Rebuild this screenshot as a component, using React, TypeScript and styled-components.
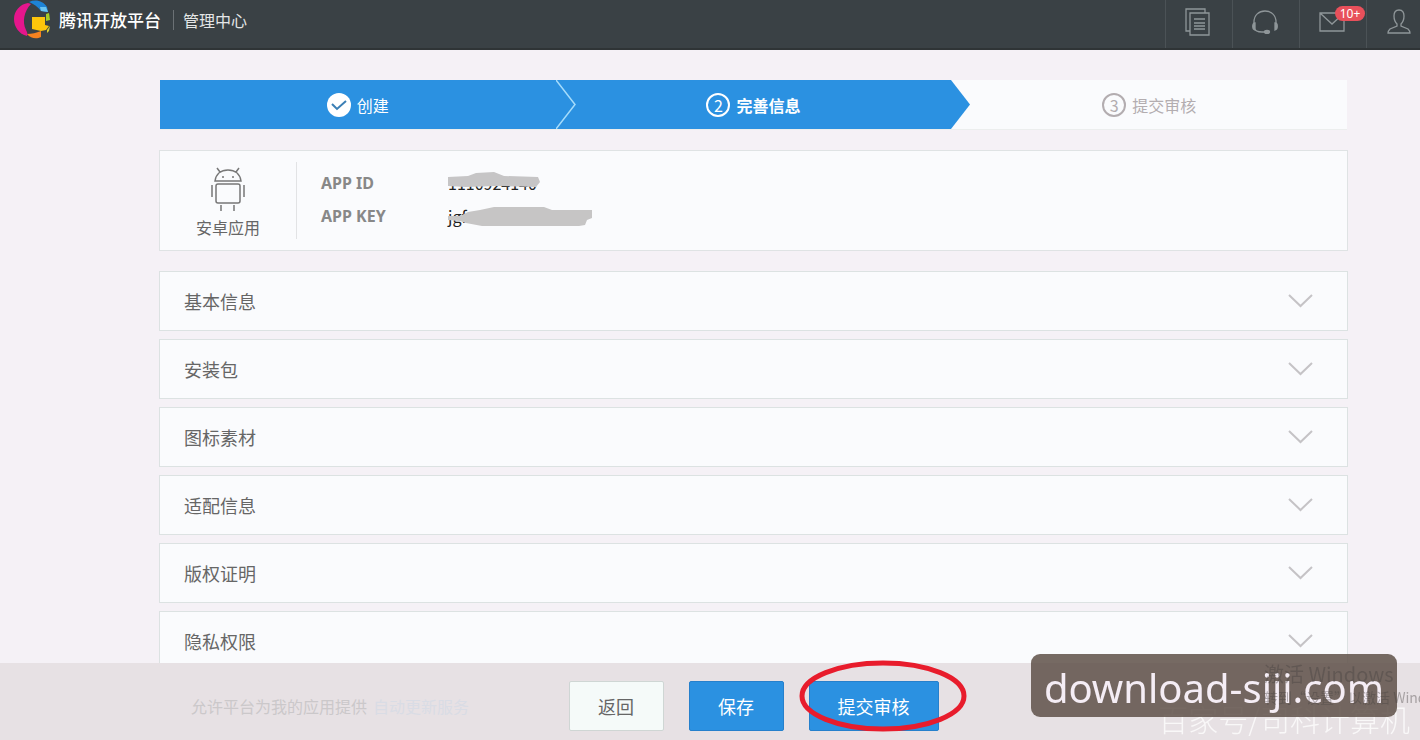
import React from "react";
import styled, { createGlobalStyle, css } from "styled-components";

const GlobalStyle = createGlobalStyle`
  * { box-sizing: border-box; }
  body {
    margin: 0;
    background: #f5f1f6;
    color: #666;
    font-family: "Noto Sans", "Noto Sans CJK SC", sans-serif;
    font-size: 16px;
    line-height: 24px;
  }
`;

const cjk = `"Noto Sans CJK SC", sans-serif`;

const Page = styled.div`
  min-height: 100vh;
  font-family: ${cjk};
`;

const Header = styled.header`
  display: flex;
  justify-content: space-between;
  height: 50px;
  background: #3a4145;
  border-bottom: 2px solid #2f3436;
  overflow: hidden;
`;

const Brand = styled.a`
  display: flex;
  align-items: center;
  padding: 0 0 8px 13px;
  color: #fff;
  text-decoration: none;
`;

const BrandName = styled.span`
  margin-left: 6px;
  font-size: 17px;
  font-weight: 500;
`;

const BrandSection = styled.span`
  margin-left: 12px;
  padding-left: 9px;
  border-left: 1px solid #6b7175;
  line-height: 20px;
  color: #e4e6e7;
`;

const Tools = styled.nav`
  display: flex;
`;

const Tool = styled.button<{ $last?: boolean }>`
  position: relative;
  display: flex;
  align-items: center;
  justify-content: center;
  width: ${(p) => (p.$last ? 54 : 67)}px;
  padding: 0 2px 4px 0;
  border: 0;
  border-left: 1px solid #4b5256;
  background: none;
  color: #8f9699;
  ${(p) => p.$last && css`justify-content: flex-end; padding-right: 9px;`}
`;

const Badge = styled.span`
  position: absolute;
  top: 6px;
  right: 1px;
  width: 30px;
  height: 15px;
  border-radius: 8px;
  background: #e8505b;
  color: #fff;
  font: 12px/15px "Noto Sans", sans-serif;
  text-align: center;
`;

const Content = styled.main`
  padding: 30px 72px 0 159px;
`;

const Steps = styled.ol`
  display: grid;
  grid-template-columns: repeat(3, 1fr);
  height: 50px;
  margin: 0 1px 20px;
  padding: 0;
  list-style: none;
  border-bottom: 1px solid #eceeee;
`;

const Step = styled.li<{ $active?: boolean; $bold?: boolean }>`
  position: relative;
  display: flex;
  align-items: center;
  justify-content: center;
  gap: 6px;
  background: ${(p) => (p.$active ? "#2b91e1" : "#fafbfd")};
  color: ${(p) => (p.$active ? "#fff" : "#b3adb0")};
  font-weight: ${(p) => (p.$bold ? 700 : 400)};
`;

const StepArrow = styled.svg`
  position: absolute;
  top: 0;
  left: 0;
  width: 20px;
  height: 100%;
`;

const StepNumber = styled.span`
  display: flex;
  align-items: center;
  justify-content: center;
  width: 24px;
  height: 24px;
  border: 2px solid currentColor;
  border-radius: 50%;
  font-weight: 400;
`;

const AppCard = styled.section`
  display: flex;
  align-items: center;
  height: 101px;
  margin-bottom: 20px;
  border: 1px solid #dfe3e4;
  background: #fafbfd;
`;

const AppKind = styled.div`
  display: flex;
  flex-direction: column;
  align-items: center;
  justify-content: flex-end;
  gap: 4px;
  width: 137px;
  height: 77px;
  border-right: 1px solid #e2e3e5;
`;

const Credentials = styled.dl`
  display: grid;
  grid-template-columns: 127px auto;
  row-gap: 9px;
  margin: 0 0 3px 24px;
`;

const Term = styled.dt`
  color: #888;
  font-family: "Noto Sans", sans-serif;
  font-weight: 700;
`;

const Value = styled.dd`
  position: relative;
  margin: 0;
  color: #222;
`;

const Smudge = styled.svg`
  position: absolute;
  top: 0;
  left: 0;
`;

const Panels = styled.div`
  display: flex;
  flex-direction: column;
  gap: 8px;
`;

const Panel = styled.button`
  display: flex;
  align-items: center;
  justify-content: space-between;
  height: 60px;
  padding: 0 34px 0 24px;
  border: 1px solid #dce2e2;
  background: #fafbfd;
  color: #666;
  font: 18px/24px ${cjk};
`;

const Footer = styled.footer`
  position: fixed;
  right: 0;
  bottom: 0;
  left: 0;
  display: grid;
  grid-template-columns: 1fr auto 1fr;
  align-items: center;
  height: 77px;
  padding: 8px 72px 0 159px;
  background: #e7e1e4;
`;

const Note = styled.p`
  margin: 0 0 0 32px;
  color: #cbc8ca;
  white-space: nowrap;
`;

const NoteLink = styled.a`
  margin-left: 6px;
  color: #d9dce5;
  text-decoration: none;
`;

const Actions = styled.div`
  display: flex;
  gap: 25px;
`;

const Action = styled.button<{ $primary?: boolean }>`
  min-width: 95px;
  height: 50px;
  padding: 0 28px;
  border: 1px solid ${(p) => (p.$primary ? "#2680cc" : "#cfd6d4")};
  border-radius: 2px;
  background: ${(p) => (p.$primary ? "#2b91e1" : "#f5faf9")};
  color: ${(p) => (p.$primary ? "#fff" : "#666")};
  font: 18px/24px ${cjk};
`;

const Marked = styled.div`
  position: relative;
  display: flex;
`;

const RedRing = styled.svg`
  position: absolute;
  top: -21px;
  left: -10px;
  pointer-events: none;
`;

const Overlay = styled.div`
  position: fixed;
  right: 0;
  bottom: 0;
  width: 390px;
  height: 90px;
  overflow: hidden;
  pointer-events: none;
`;

const Activation = styled.div`
  position: absolute;
  top: 12px;
  left: 234px;
  color: rgba(70, 65, 66, 0.4);
  font: 14px/22px ${cjk};
  white-space: nowrap;
`;

const ActivationTitle = styled.div`
  font-size: 20px;
  line-height: 24px;
`;

const Author = styled.div`
  position: absolute;
  right: 10px;
  bottom: 4px;
  color: rgba(255, 255, 255, 0.75);
  font: 300 30px/36px ${cjk};
  white-space: nowrap;
`;

const SiteTag = styled.div`
  position: absolute;
  top: 4px;
  right: 23px;
  width: 366px;
  height: 63px;
  border-radius: 9px;
  background: rgba(98, 84, 76, 0.87);
  color: #f5edf5;
  font: 40px/68px "Noto Sans", sans-serif;
  text-align: center;
`;

const Logo = () => (
  <svg width="40" height="42" viewBox="0 0 40 42" aria-hidden="true">
    <path d="M15 4C7 5 1 12 1 20c0 8 5 15 13 17 1-2 0-4-1-6-4-8-2-19 5-26z" fill="#e5168c" />
    <path d="M16 3c7-3 14-1 18 5l1 5-7-1c-3-4-7-7-12-9z" fill="#1d83d6" />
    <path d="M27 8l6 0 2 5-7-1z" fill="#6bc4f0" />
    <path d="M33 15l3-1 1 7-4 1z" fill="#a5cc26" />
    <path d="M19 18h13v8l4 1-3 4-5 1-9-2z" fill="#fdc50b" />
    <path d="M34 31l3-4-1 5-2 2z" fill="#d9cf35" />
    <path d="M14 35c5 0 9-1 14-3v6c-4 2-10 2-14-3z" fill="#f58220" />
  </svg>
);

const line = { fill: "none", stroke: "currentColor", strokeWidth: 1.3 };

const DocsIcon = () => (
  <svg width="26" height="28" viewBox="0 0 26 28" {...line}>
    <path d="M5 23H1V1h19v4M5 5h19v22H5zM9 11h11M9 15h11M9 18h11M9 21h11" />
  </svg>
);

const HeadsetIcon = () => (
  <svg width="28" height="24" viewBox="0 0 28 24" {...line}>
    <path d="M3 13V12C3 5 8 1 14 1s11 4 11 11v1M3 18c1 3 4 4 8 4h4" />
    <path d="M4 13c-3 0-3 6 0 7zM24 13c3 0 3 6 0 7z" fill="currentColor" />
    <ellipse cx="16" cy="22" rx="2.5" ry="1.5" fill="currentColor" />
  </svg>
);

const MailIcon = () => (
  <svg width="26" height="20" viewBox="0 0 26 20" {...line}>
    <path d="M1 1h24v18H1zM1 1l12 11L25 1" />
  </svg>
);

const UserIcon = () => (
  <svg width="24" height="26" viewBox="0 0 24 26" {...line}>
    <path d="M12 1c-4 0-5 3-5 6 0 4 1 6 3 8v2l-7 3c-1 1-2 2-2 4h22c0-2-1-3-2-4l-7-3v-2c2-2 3-4 3-8 0-3-1-6-5-6z" />
  </svg>
);

const AndroidIcon = () => (
  <svg width="34" height="44" viewBox="0 0 34 44" fill="none" stroke="#777" strokeWidth="1.5">
    <path d="M4 14C5 7 10 3 17 3s12 4 13 11zM9 5L6 1M25 5l3-4" />
    <path d="M7 17h20c1 0 2 1 2 2v15c0 1-1 2-2 2H7c-1 0-2-1-2-2V19c0-1 1-2 2-2zM1 18v12M33 18v12M10 38v6M23 38v6" />
    <path d="M11 10h2M21 10h2" />
  </svg>
);

const Chevron = () => (
  <svg width="25" height="14" viewBox="0 0 25 14" fill="none" stroke="#c5c3c6" strokeWidth="2">
    <path d="M1 1l11.5 11L24 1" />
  </svg>
);

const CheckMark = () => (
  <svg width="24" height="24" viewBox="0 0 24 24" aria-hidden="true">
    <circle cx="12" cy="12" r="12" fill="#fff" />
    <path d="M5 11l5 5 9-8" fill="none" stroke="#3b7fb5" strokeWidth="2" />
  </svg>
);

const sections = ["基本信息", "安装包", "图标素材", "适配信息", "版权证明", "隐私权限"];

export default function App() {
  return (
    <Page>
      <GlobalStyle />
      <Header>
        <Brand href="#">
          <Logo />
          <BrandName>腾讯开放平台</BrandName>
          <BrandSection>管理中心</BrandSection>
        </Brand>
        <Tools>
          <Tool aria-label="文档"><DocsIcon /></Tool>
          <Tool aria-label="客服"><HeadsetIcon /></Tool>
          <Tool aria-label="消息"><MailIcon /><Badge>10+</Badge></Tool>
          <Tool aria-label="账号" $last><UserIcon /></Tool>
        </Tools>
      </Header>

      <Content>
        <Steps>
          <Step $active><CheckMark />创建</Step>
          <Step $active $bold>
            <StepArrow viewBox="0 0 20 49" preserveAspectRatio="none">
              <path d="M0 0l19 24.5L0 49" fill="none" stroke="#a5dcfb" strokeWidth="1.5" />
            </StepArrow>
            <StepNumber>2</StepNumber>完善信息
          </Step>
          <Step>
            <StepArrow viewBox="0 0 20 49" preserveAspectRatio="none">
              <path d="M0 0l19 24.5L0 49z" fill="#2b91e1" />
            </StepArrow>
            <StepNumber>3</StepNumber>提交审核
          </Step>
        </Steps>

        <AppCard>
          <AppKind><AndroidIcon />安卓应用</AppKind>
          <Credentials>
            <Term>APP ID</Term>
            <Value>
              1110924140
              <Smudge width="94" height="24" viewBox="0 0 94 24">
                <path d="M0 6l20-1 8-3 18-1 10 4 34 1 2 5-4 5-40-1-30 1-18-1z" fill="#c6c5c6" />
              </Smudge>
            </Value>
            <Term>APP KEY</Term>
            <Value>
              jgf
              <Smudge width="146" height="24" viewBox="0 0 146 24">
                <path d="M0 12l12 0 8-4 12-2 14-3h50l8 3h40v8l-5 2-2 5-6 1H34l-16-3-6-2-12-1z" fill="#c6c5c5" />
              </Smudge>
            </Value>
          </Credentials>
        </AppCard>

        <Panels>
          {sections.map((name) => (
            <Panel key={name}>{name}<Chevron /></Panel>
          ))}
        </Panels>
      </Content>

      <Footer>
        <Note>允许平台为我的应用提供<NoteLink href="#">自动更新服务</NoteLink></Note>
        <Actions>
          <Action>返回</Action>
          <Action $primary>保存</Action>
          <Marked>
            <Action $primary>提交审核</Action>
            <RedRing width="168" height="72" viewBox="0 0 168 72">
              <ellipse cx="84" cy="36" rx="81" ry="33" fill="none" stroke="#e81c2c" strokeWidth="5" />
            </RedRing>
          </Marked>
        </Actions>
      </Footer>

      <Overlay>
        <Author>百家号/司科计算机</Author>
        <SiteTag>download-siji.com</SiteTag>
        <Activation>
          <ActivationTitle>激活 Windows</ActivationTitle>
          转到“设置”以激活 Windows
        </Activation>
      </Overlay>
    </Page>
  );
}
